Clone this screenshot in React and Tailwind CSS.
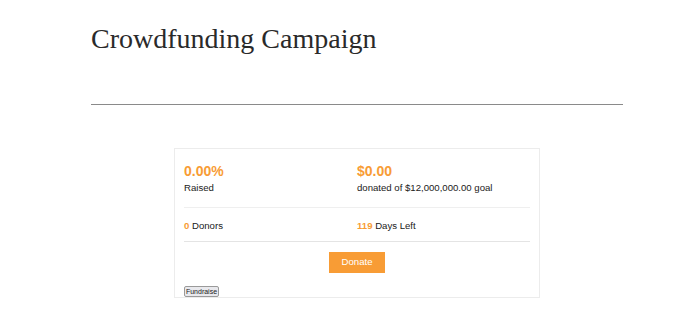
import React from 'react';

const sans = "font-['Liberation_Sans',Arial,sans-serif]";

export default function App() {
  return (
    <div className="min-h-[312px] w-[680px] bg-white">
      <div className="ml-[91px] w-[532px] pt-[19px]">
        {/* 타이틀 */}
        <h1 className="font-['Liberation_Serif','DejaVu_Serif',serif] text-[28px] leading-[40px] font-normal text-[#2a2a2a]">
          Crowdfunding Campaign
        </h1>
        <hr className="mt-[45px] border-0 border-t border-[#8a8a8a]" />

        {/* 캠페인 카드 */}
        <div className={`${sans} mx-auto mt-[43px] w-[366px] border border-[#ececec] px-[9px] text-[#1a1a1a]`}>
          <div className="grid grid-cols-2 border-b border-[#efefef] pt-[12px] pb-[12px]">
            <div>
              <div className="text-[14px] leading-[20px] font-bold text-[#f89c35]">0.00%</div>
              <div className="text-[9.6px] leading-[14px]">Raised</div>
            </div>
            <div>
              <div className="text-[14px] leading-[20px] font-bold text-[#f89c35]">$0.00</div>
              <div className="text-[9.6px] leading-[14px]">donated of $12,000,000.00 goal</div>
            </div>
          </div>

          <div className="grid grid-cols-2 border-b border-[#e4e4e4] pt-[11px] pb-[8px] text-[9.6px] leading-[14px]">
            <div>
              <span className="font-bold text-[#f89c35]">0</span> Donors
            </div>
            <div>
              <span className="font-bold text-[#f89c35]">119</span> Days Left
            </div>
          </div>

          <div className="flex justify-center pt-[10px]">
            <button className="h-[21px] w-[56px] bg-[#f89c35] text-[9.6px] text-white">
              Donate
            </button>
          </div>

          <div className="pt-[13px]">
            <button className="block h-[11px] w-[35px] rounded-[2px] border border-[#9a9a9a] bg-[#e9e9ed] text-[7px] leading-[9px] text-[#222]">
              Fundraise
            </button>
          </div>
        </div>
      </div>
    </div>
  );
}
